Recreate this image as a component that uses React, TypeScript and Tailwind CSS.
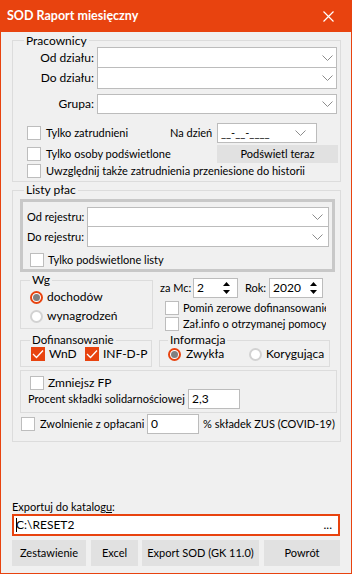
import React from "react";

function Chevron() {
  return (
    <svg width="11" height="6" viewBox="0 0 11 6" className="shrink-0">
      <path d="M0.5 0.5 L5.5 5.5 L10.5 0.5" fill="none" stroke="#8c8c8c" strokeWidth="1" />
    </svg>
  );
}

function Combo({ w, h, children, pr = "pr-[3px]" }: { w: string; h: string; children?: React.ReactNode; pr?: string }) {
  return (
    <div className={`${w} ${h} ${pr} border border-[#bcbcbc] bg-white flex items-center justify-end shrink-0`}>
      {children}
      <Chevron />
    </div>
  );
}

function Box() {
  return <div className="w-[14px] h-[14px] border border-[#bdbdbd] bg-white shrink-0" />;
}

function OrangeBox() {
  return (
    <div className="w-[14px] h-[14px] bg-[#e8430f] flex items-center justify-center shrink-0">
      <svg width="12" height="10" viewBox="0 0 12 10">
        <path d="M1 5 L4.5 8.5 L11 1.5" fill="none" stroke="#ffffff" strokeWidth="1.3" />
      </svg>
    </div>
  );
}

function Radio({ on }: { on?: boolean }) {
  if (on)
    return (
      <div className="w-[13px] h-[13px] rounded-full border-2 border-[#e8430f] bg-white flex items-center justify-center shrink-0">
        <div className="w-[7px] h-[7px] rounded-full bg-[#808080]" />
      </div>
    );
  return <div className="w-[13px] h-[13px] rounded-full border-2 border-[#d2d2d2] bg-white shrink-0" />;
}

function Spin() {
  return (
    <svg width="7" height="12" viewBox="0 0 7 12" className="shrink-0">
      <path d="M0 4 L3.5 0 L7 4 Z" fill="#000" />
      <path d="M0 8 L3.5 12 L7 8 Z" fill="#000" />
    </svg>
  );
}

export default function App() {
  return (
    <div className="w-[352px] h-[574px] flex flex-col bg-[#f0f0f0] text-[11px] leading-[16px] text-black overflow-hidden whitespace-nowrap [font-family:Lato,sans-serif]">
      {/* Title bar */}
      <div className="h-[32px] shrink-0 bg-[#e8430f] flex items-center justify-between pl-[7px] pr-[18px] text-white">
        <span className="font-bold text-[12.5px]">SOD Raport miesięczny</span>
        <svg width="11" height="11" viewBox="0 0 11 11">
          <path d="M0.5 0.5 L10.5 10.5 M10.5 0.5 L0.5 10.5" stroke="#fff" strokeWidth="1.2" />
        </svg>
      </div>

      {/* Body */}
      <div className="flex-1 flex flex-col border-x border-b border-[#e8430f] pl-[11px]">
        {/* Pracownicy */}
        <fieldset className="mt-[1px] w-[329px] border border-[#dcdcdc] pb-[2px]">
          <legend className="ml-[11px] px-[2px] h-[15px] leading-[15px] text-[12px]">Pracownicy</legend>
          <div className="-mt-[1px] flex items-center h-[21px]">
            <div className="w-[81px] text-right text-[12px]">Od działu:</div>
            <div className="ml-[3px]">
              <Combo w="w-[240px]" h="h-[21px]" />
            </div>
          </div>
          <div className="-mt-[1px] flex items-center h-[22px]">
            <div className="w-[81px] text-right text-[12px]">Do działu:</div>
            <div className="ml-[3px]">
              <Combo w="w-[240px]" h="h-[22px]" />
            </div>
          </div>
          <div className="mt-[5px] flex items-center h-[20px]">
            <div className="w-[81px] text-right text-[12px]">Grupa:</div>
            <div className="ml-[3px]">
              <Combo w="w-[240px]" h="h-[20px]" />
            </div>
          </div>
          <div className="mt-[9px] flex items-center h-[20px] pl-[14px]">
            <div className="w-[143px] flex items-center gap-[5px]">
              <Box />
              <span>Tylko zatrudnieni</span>
            </div>
            <div className="w-[47px]">Na dzień</div>
            <div className="w-[100px] h-[20px] border border-[#bcbcbc] bg-white flex items-center pl-[3px] pr-[10px]">
              <span className="flex-1">__-__-____</span>
              <Chevron />
            </div>
          </div>
          <div className="mt-[2px] flex items-center h-[18px] pl-[14px]">
            <div className="w-[190px] flex items-center gap-[5px]">
              <Box />
              <span>Tylko osoby podświetlone</span>
            </div>
            <div className="w-[121px] h-[18px] bg-[#e1e1e1] flex items-center justify-center">Podświetl teraz</div>
          </div>
          <div className="flex items-center h-[16px] pl-[14px] gap-[5px]">
            <Box />
            <span>Uwzględnij także zatrudnienia przeniesione do historii</span>
          </div>
        </fieldset>

        {/* Listy płac */}
        <fieldset className="w-[329px] border border-[#dcdcdc] pb-[7px]">
          <legend className="ml-[11px] px-[2px] h-[16px] leading-[16px] text-[12px]">Listy płac</legend>
          <div className="ml-[7px] mt-[1px] w-[315px] h-[73px] border-[3px] border-[#c8c8c8] pt-[5px]">
            <div className="flex items-center h-[20px] pl-[4px]">
              <div className="w-[60px]">Od rejestru:</div>
              <Combo w="w-[242px]" h="h-[20px]" pr="pr-[5px]" />
            </div>
            <div className="-mt-[1px] flex items-center h-[21px] pl-[4px]">
              <div className="w-[60px]">Do rejestru:</div>
              <Combo w="w-[242px]" h="h-[21px]" pr="pr-[5px]" />
            </div>
            <div className="mt-[5px] flex items-center h-[16px] pl-[7px] gap-[4px]">
              <Box />
              <span>Tylko podświetlone listy</span>
            </div>
          </div>

          {/* Row A */}
          <div className="flex items-start">
            <fieldset className="ml-[7px] w-[133px] border border-[#dcdcdc] pb-[2px]">
              <legend className="ml-[9px] px-[2px] h-[16px] leading-[16px] text-[12px]">Wg</legend>
              <div className="flex items-center h-[18px] pl-[9px] gap-[4px] text-[12px]">
                <Radio on />
                <span>dochodów</span>
              </div>
              <div className="flex items-center h-[20px] pl-[9px] gap-[4px] text-[12px]">
                <Radio />
                <span>wynagrodzeń</span>
              </div>
            </fieldset>
            <div className="flex flex-col pl-[7px]">
              <div className="mt-[6px] flex items-center h-[20px]">
                <div className="w-[33px]">za Mc:</div>
                <div className="w-[45px] h-[20px] border border-[#bcbcbc] bg-white flex items-center pl-[3px] pr-[7px] text-[12px]">
                  <span className="flex-1">2</span>
                  <Spin />
                </div>
                <div className="ml-[7px] w-[24px]">Rok:</div>
                <div className="w-[54px] h-[20px] border border-[#bcbcbc] bg-white flex items-center pl-[3px] pr-[5px] text-[12px]">
                  <span className="flex-1">2020</span>
                  <Spin />
                </div>
              </div>
              <div className="mt-[2px] ml-[5px] w-[161px] overflow-hidden flex items-center h-[16px] gap-[4px]">
                <Box />
                <span>Pomiń zerowe dofinansowanie</span>
              </div>
              <div className="ml-[5px] w-[161px] overflow-hidden flex items-center h-[16px] gap-[4px]">
                <Box />
                <span>Zał.info o otrzymanej pomocy</span>
              </div>
            </div>
          </div>

          {/* Row B */}
          <div className="mt-[1px] flex items-start">
            <fieldset className="ml-[7px] w-[132px] border border-[#dcdcdc] pb-[4px]">
              <legend className="ml-[9px] px-[2px] h-[14px] leading-[14px] text-[11.5px]">Dofinansowanie</legend>
              <div className="-mt-[1px] flex items-center h-[16px] pl-[10px] text-[12px]">
                <div className="w-[54px] flex items-center gap-[4px]">
                  <OrangeBox />
                  <span>WnD</span>
                </div>
                <div className="flex items-center gap-[4px]">
                  <OrangeBox />
                  <span>INF-D-P</span>
                </div>
              </div>
            </fieldset>
            <fieldset className="ml-[7px] w-[171px] border border-[#dcdcdc] pb-[4px]">
              <legend className="ml-[8px] px-[2px] h-[14px] leading-[14px] text-[12px]">Informacja</legend>
              <div className="-mt-[1px] flex items-center h-[16px] pl-[8px] text-[12px]">
                <div className="w-[81px] flex items-center gap-[5px]">
                  <Radio on />
                  <span>Zwykła</span>
                </div>
                <div className="flex items-center gap-[4px]">
                  <Radio />
                  <span>Korygująca</span>
                </div>
              </div>
            </fieldset>
          </div>

          {/* Zmniejsz FP box */}
          <div className="mt-[3px] ml-[7px] w-[317px] border border-[#dcdcdc] pt-[4px] pb-[3px]">
            <div className="flex items-center h-[16px] pl-[9px] gap-[4px] text-[12px]">
              <Box />
              <span>Zmniejsz FP</span>
            </div>
            <div className="-mt-[2px] flex items-center h-[20px] pl-[7px]">
              <div className="w-[160px]">Procent składki solidarnościowej</div>
              <div className="w-[52px] h-[20px] border border-[#bcbcbc] bg-white flex items-center pl-[3px] text-[12px]">2,3</div>
            </div>
          </div>

          {/* Zwolnienie */}
          <div className="mt-[1px] flex items-center h-[20px] pl-[8px]">
            <Box />
            <div className="ml-[5px] w-[104px] overflow-hidden">Zwolnienie z opłacania</div>
            <div className="ml-[3px] w-[52px] h-[20px] border border-[#bcbcbc] bg-white flex items-center pl-[3px] text-[12px]">0</div>
            <div className="ml-[4px]">% składek ZUS (COVID-19)</div>
          </div>
        </fieldset>

        {/* Export */}
        <div className="mt-auto pb-[7px] flex flex-col">
          <div className="h-[14px] leading-[14px]">
            Exportuj do katalog<span className="underline">u</span>:
          </div>
          <div className="w-[328px] h-[22px] border-2 border-[#e8430f] bg-white flex items-center pl-[2px] pr-[6px] text-[12px]">
            <span className="w-[1px] h-[14px] bg-black -mr-[1px]" />
            <span className="flex-1">C:\RESET2</span>
            <span>...</span>
          </div>
          <div className="mt-[4px] flex h-[26px]">
            <div className="w-[74px] bg-[#e1e1e1] flex items-center justify-center">Zestawienie</div>
            <div className="ml-[5px] w-[47px] bg-[#e1e1e1] flex items-center justify-center">Excel</div>
            <div className="ml-[4px] w-[117px] bg-[#e1e1e1] flex items-center justify-center">Export SOD (GK 11.0)</div>
            <div className="ml-[5px] w-[76px] bg-[#e1e1e1] flex items-center justify-center">Powrót</div>
          </div>
        </div>
      </div>
    </div>
  );
}
